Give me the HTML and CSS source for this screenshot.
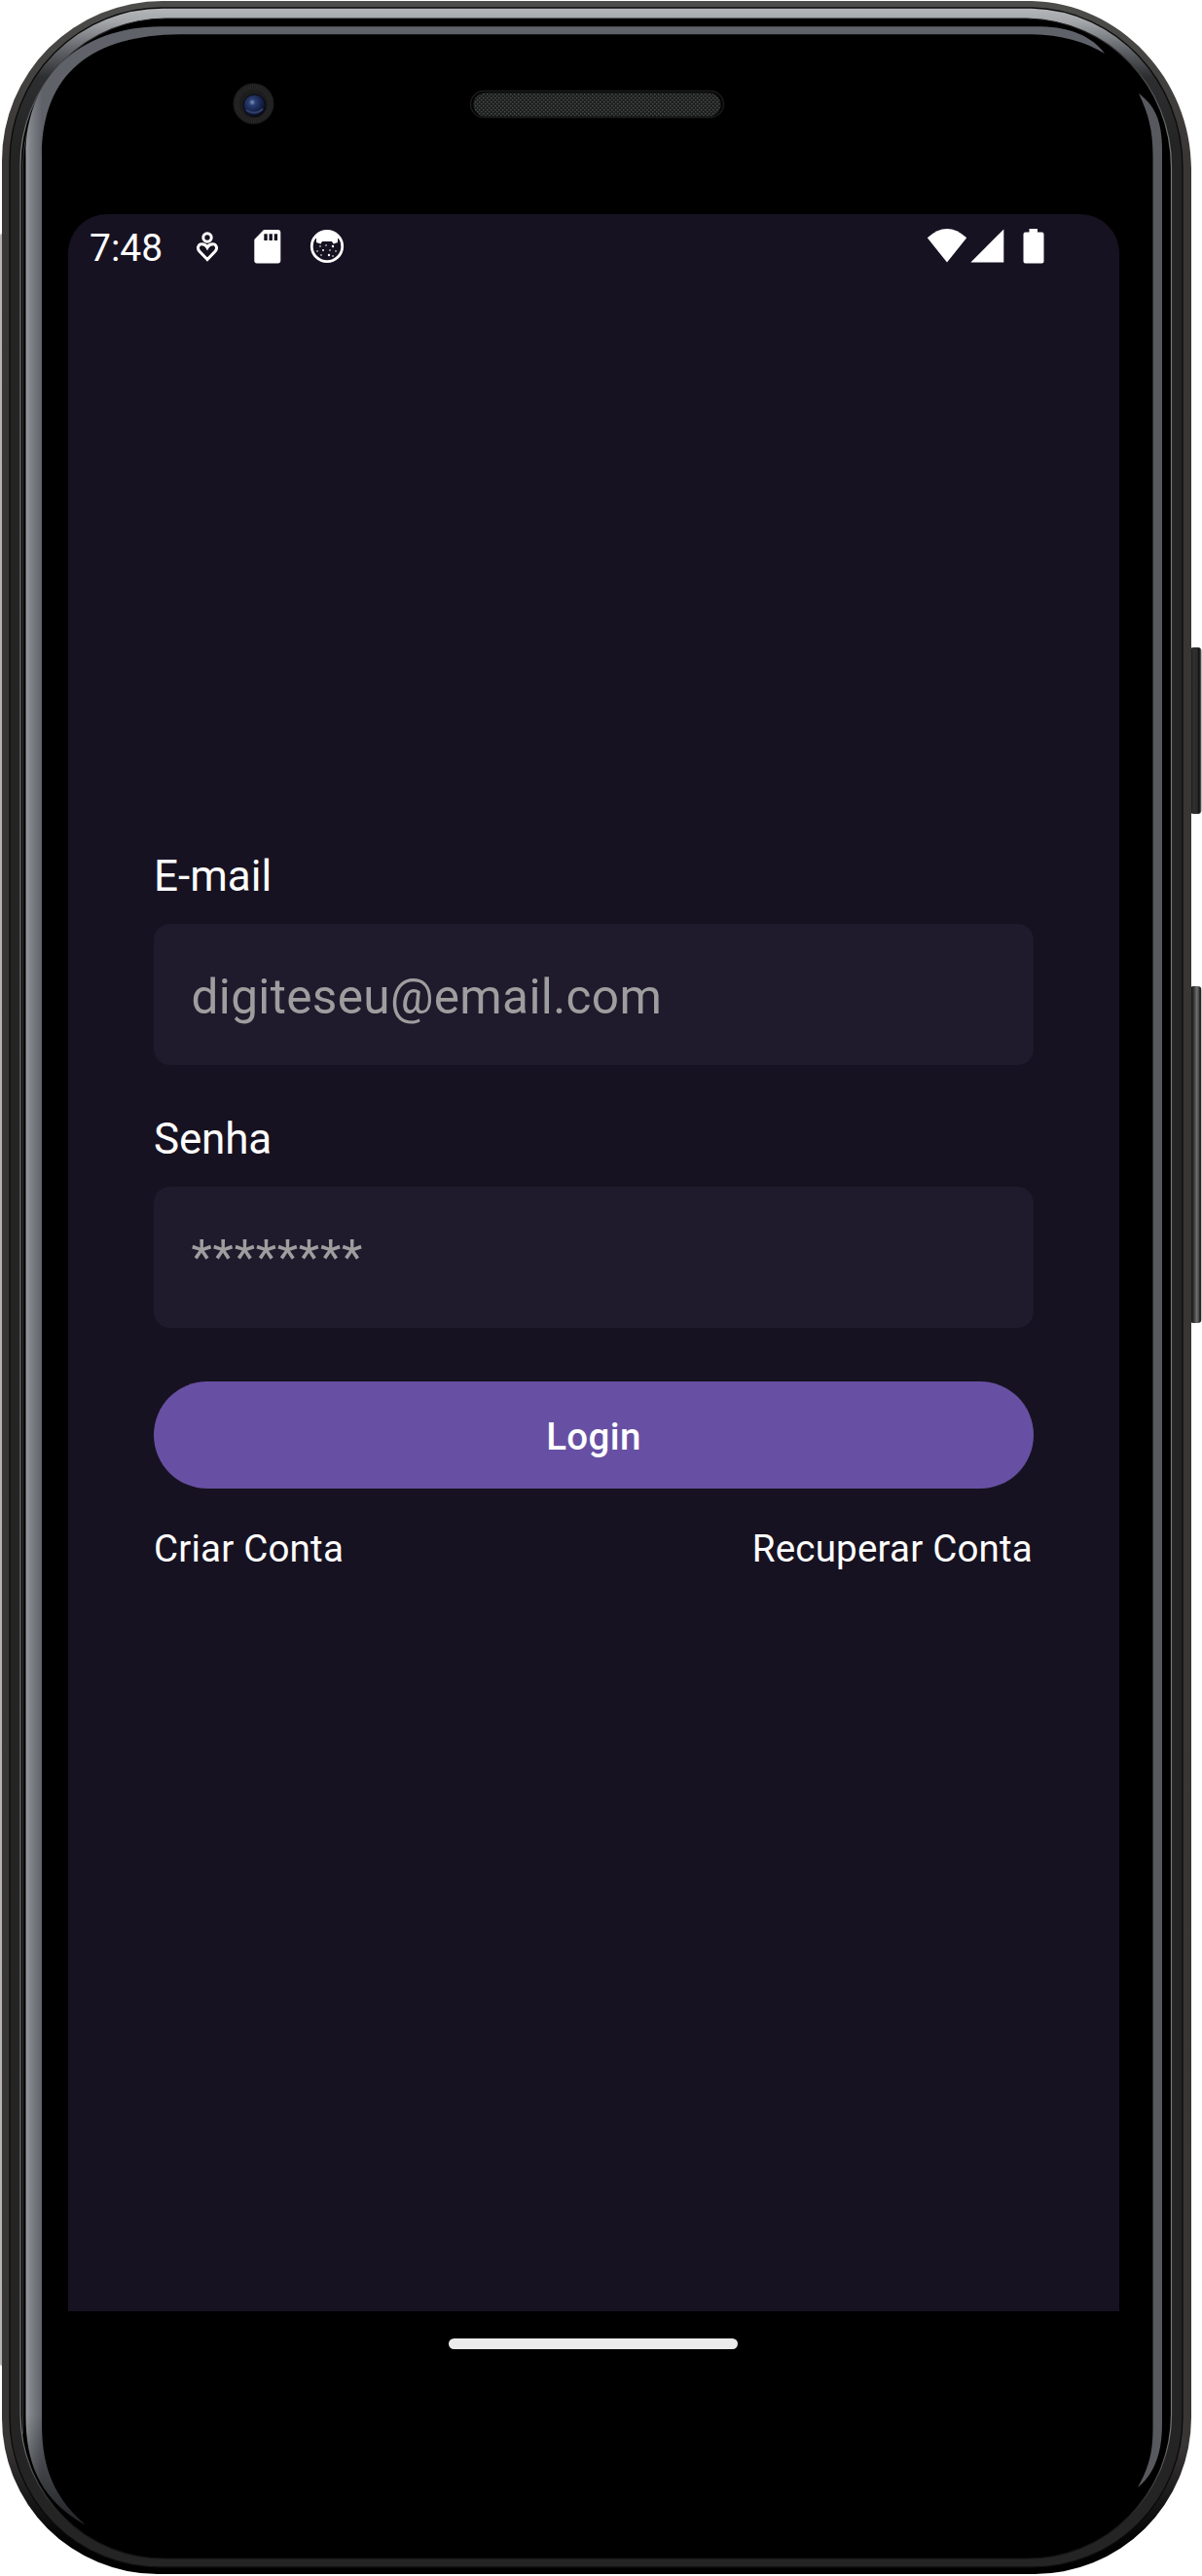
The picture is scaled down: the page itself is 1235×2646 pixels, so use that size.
FILE: index.html
```html
<!DOCTYPE html>
<html lang="pt-BR">
<head>
<meta charset="utf-8">
<title>Login</title>
<link rel="stylesheet" href="styles.css">
</head>
<body>
<main class="device">
  <svg class="frame" viewBox="0 0 1235 2646" aria-hidden="true">
    <defs>
      <linearGradient id="rim" x1="0" y1="0" x2="0" y2="1">
        <stop offset="0" stop-color="#4d4d4b"/><stop offset=".06" stop-color="#393635"/><stop offset=".95" stop-color="#383535"/><stop offset=".985" stop-color="#050505"/><stop offset="1" stop-color="#000"/>
      </linearGradient>
      <linearGradient id="band" gradientUnits="userSpaceOnUse" x1="0" y1="8" x2="0" y2="150">
        <stop offset="0" stop-color="#b4b6b9"/><stop offset=".1" stop-color="#a4a7aa"/><stop offset=".3" stop-color="#62656a"/><stop offset=".5" stop-color="#2d2e30"/><stop offset="1" stop-color="#242424"/>
      </linearGradient>
      <linearGradient id="hair" x1="0" y1="0" x2="0" y2="1">
        <stop offset="0" stop-color="#1c1c1c"/><stop offset=".05" stop-color="#777"/><stop offset=".95" stop-color="#777"/><stop offset=".99" stop-color="#111"/>
      </linearGradient>
      <linearGradient id="shine" gradientUnits="userSpaceOnUse" x1="26" y1="0" x2="43" y2="0">
        <stop offset="0" stop-color="#999b9e"/><stop offset=".3" stop-color="#81858a"/><stop offset="1" stop-color="#5f6269"/>
      </linearGradient>
      <linearGradient id="glint" gradientUnits="userSpaceOnUse" x1="0" y1="2480" x2="0" y2="2595">
        <stop offset="0" stop-color="#000" stop-opacity="0"/><stop offset="1" stop-color="#000" stop-opacity=".65"/>
      </linearGradient>
      <linearGradient id="key" x1="0" y1="0" x2="1" y2="0">
        <stop offset="0" stop-color="#111"/><stop offset=".3" stop-color="#303030"/><stop offset=".65" stop-color="#2a2a2a"/><stop offset=".8" stop-color="#0b0b0b"/><stop offset="1" stop-color="#777"/>
      </linearGradient>
      <linearGradient id="key2" x1="0" y1="0" x2="1" y2="0">
        <stop offset="0" stop-color="#0a0a0a"/><stop offset=".3" stop-color="#2c2c2c"/><stop offset=".6" stop-color="#707070"/><stop offset=".78" stop-color="#444"/><stop offset=".9" stop-color="#111"/><stop offset="1" stop-color="#888"/>
      </linearGradient>
      <radialGradient id="lens" cx=".4" cy=".35" r=".65">
        <stop offset="0" stop-color="#8495b8"/><stop offset=".22" stop-color="#2b3f74"/><stop offset=".6" stop-color="#16244e"/><stop offset="1" stop-color="#0a0e1c"/>
      </radialGradient>
      <pattern id="mesh" width="4" height="4" patternUnits="userSpaceOnUse">
        <rect width="4" height="4" fill="#1c1d1d"/><rect width="1.5" height="1.5" fill="#4b4d4d"/><rect x="2" y="2" width="1.5" height="1.5" fill="#454747"/>
      </pattern>
    </defs>
    <rect x="0" y="240" width="4" height="2190" rx="2" fill="#b4b5b4"/>
    <rect x="1222.500" y="665" width="12" height="171" rx="4" fill="url(#key)"/>
    <rect x="1222.500" y="1013" width="12" height="346" rx="4" fill="url(#key2)"/>
    <path fill="url(#rim)" d="M167 1H1060C1151 3 1224 82 1224 173V2483A161 161 0 0 1 1061 2644H162A160 160 0 0 1 2 2484V165A165 164 0 0 1 167 1Z"/>
    <path fill="url(#band)" stroke="#0b0b0b" stroke-width="1.3" d="M167 8H1060C1147 10 1215 84 1215 172V2483A154 154 0 0 1 1061 2637H164A154 154 0 0 1 10 2483V166A157 158 0 0 1 167 8Z"/>
    <path fill="#000" stroke="url(#hair)" stroke-width="1.2" d="M170 19H1055C1140 21 1203.500 88 1203.500 172V2480A148 148 0 0 1 1055.500 2628H169A148 148 0 0 1 21 2480V169A149 150 0 0 1 170 19Z"/>
    <path fill="none" stroke="#555" stroke-width=".7" d="M23.500 2500V167A145 145 0 0 1 60 75"/>
    <path fill="url(#shine)" d="M87 2593C50 2572 26 2541 26.500 2480V160C26.500 80 80 28 165 27.300H1070C1100 28 1123 38 1135 55C1115 43 1090 35.500 1060 35.300H185C95 36 43 75 43 160V2490C43 2535 56 2566 87 2593Z"/>
    <path fill="url(#glint)" d="M87 2593C50 2572 26 2541 26.500 2480H43C43 2535 56 2566 87 2593Z"/>
    <path fill="#57595e" d="M1170 96C1186 108 1194 123 1194 155V2490C1194 2523 1184 2543 1169 2555C1180 2535 1184.500 2520 1184.500 2495V160C1184.500 134 1180 117 1170 96Z"/>
    <circle cx="260.500" cy="106.500" r="21" fill="#1d1d1e"/>
    <circle cx="260.500" cy="106.500" r="17" fill="none" stroke="#29292a" stroke-width="5" stroke-dasharray="1 1"/>
    <circle cx="261.500" cy="108.500" r="11.500" fill="url(#lens)" stroke="#090909"/>
    <path d="M253 113Q262 119 270 112" fill="none" stroke="#314069" stroke-width="2"/>
    <rect x="483.500" y="93.500" width="260" height="27" rx="13.500" fill="#050505" stroke="#1c1c1e" stroke-width="1.300"/>
    <rect x="486.500" y="95.500" width="254" height="24" rx="12" fill="url(#mesh)"/>
  </svg>

  <section class="screen">
    <header class="status">
      <span class="time">7:48</span>
      <svg class="icon person" viewBox="0 0 24 32"><circle cx="12" cy="7" r="4.200"/><path d="M12 29.500 3.800 21C1 17.800 3 13.800 6.300 13.800C9 13.800 11 15.300 12 17.200C13 15.300 15 13.800 17.700 13.800C21 13.800 23 17.800 20.200 21Z"/></svg>
      <svg class="icon card" viewBox="0 0 28 35"><path fill-rule="evenodd" d="M10 0H24.500Q27.300 0 27.300 3V31.500Q27.300 34.500 24.500 34.500H3Q.3 34.500 .3 31.500V10ZM10.300 4.200V11H13.700V4.200ZM15.500 4.200V11H18.900V4.200ZM20.700 4.200V11H24.100V4.200Z"/></svg>
      <svg class="icon cat" viewBox="0 0 36 36"><circle cx="18" cy="18" r="15.700" fill="none" stroke="#fff" stroke-width="2.800"/><path d="M4 11Q9 2 18 2T32 11L29 9.500V14L24.500 15.500L23 13H13L11.500 15.500L7 14V9.500Z"/><g><circle cx="11" cy="18" r=".8"/><circle cx="17" cy="17" r=".8"/><circle cx="24" cy="18" r="1.200"/><circle cx="8" cy="23" r=".8"/><circle cx="14" cy="22" r="1"/><circle cx="21" cy="22" r=".8"/><circle cx="27" cy="23" r=".8"/><circle cx="12" cy="27" r=".8"/><circle cx="20" cy="27" r="1.200"/><circle cx="24" cy="28" r=".8"/></g></svg>
      <span class="spacer"></span>
      <svg class="icon wifi" viewBox="0 0 42 35"><path d="M.800 9.300Q21-9.300 41.200 9.300L21 34.500Z"/></svg>
      <svg class="icon signal" viewBox="0 0 35 35"><path d="M34.300 .5V34.500H.3Z"/></svg>
      <svg class="icon battery" viewBox="0 0 22 36"><path d="M6.500 0H15V3.500H19.500Q21.500 3.500 21.500 5.500V33.500Q21.500 35.500 19.500 35.500H2.500Q.500 35.500 .500 33.500V5.500Q.500 3.500 2.500 3.500H6.500Z"/></svg>
    </header>
    <form class="login">
      <label class="label" for="email">E-mail</label>
      <input class="field" id="email" type="text" placeholder="digiteseu@email.com">
      <label class="label second" for="senha">Senha</label>
      <input class="field secret" id="senha" type="text" placeholder="********">
      <button class="submit" type="button">Login</button>
      <nav class="links"><span>Criar Conta</span><span>Recuperar Conta</span></nav>
    </form>
  </section>
  <div class="navbar"><span class="pill"></span></div>
</main>
</body>
</html>
```
FILE: styles.css
```css
* { box-sizing: border-box; }

body {
  margin: 0;
  background: #fff;
  font-family: Roboto, sans-serif;
  color: #fff;
}

.device {
  position: relative;
  width: 1235px;
  height: 2646px;
  padding: 220px 85px 0 70px;
  overflow: hidden;
}

.frame {
  position: absolute;
  inset: 0;
  width: 1235px;
  height: 2646px;
}

.screen {
  position: relative;
  height: 2154px;
  background: #171221;
  border-radius: 40px 40px 0 0;
}

.status {
  display: flex;
  align-items: flex-start;
  height: 66px;
  padding: 15px 77px 0 22px;
}

.time {
  width: 110px;
  font-size: 39px;
  line-height: 40px;
}

.icon { flex: none; fill: #fff; }
.spacer { flex: 1; }

.person { width: 24px; height: 32px; margin: 2px 36px 0 -1px; fill: none; stroke: #fff; stroke-width: 3; }
.card { width: 28px; height: 35px; margin: 1px 28.5px 0 0; }
.cat { width: 36px; height: 36px; }
.wifi { width: 42px; height: 35px; }
.signal { width: 35px; height: 35px; margin-left: 3px; }
.battery { width: 22px; height: 36px; margin-left: 19px; }

.login {
  display: flex;
  flex-direction: column;
  padding: 588px 88px 0;
}

.label {
  height: 75px;
  font-size: 44px;
  line-height: 52px;
}

.second { margin-top: 50px; letter-spacing: -.2px; }

.field {
  width: 904px;
  height: 145px;
  padding: 4px 38.5px 0;
  border: 0;
  border-radius: 16.5px;
  background: #1f1a2c;
  font: 49.5px Roboto, sans-serif;
  letter-spacing: .35px;
}

.field::placeholder { color: #9e9e9e; opacity: 1; }
.secret { padding-top: 0; letter-spacing: .75px; }

.submit {
  height: 110px;
  margin-top: 55px;
  padding: 3px 0 0;
  border: 0;
  border-radius: 55px;
  background: #6750a3;
  color: #fff;
  font: 500 38.5px Roboto, sans-serif;
  letter-spacing: .4px;
}

.links {
  display: flex;
  justify-content: space-between;
  margin-top: 39px;
  padding-right: 1px;
  font-size: 38.5px;
  line-height: 46px;
  letter-spacing: .2px;
}

.navbar {
  position: relative;
  display: flex;
  justify-content: center;
  padding: 27.5px 1px 0 0;
}

.pill {
  width: 297px;
  height: 11px;
  border-radius: 6px;
  background: #ebebeb;
}
```
